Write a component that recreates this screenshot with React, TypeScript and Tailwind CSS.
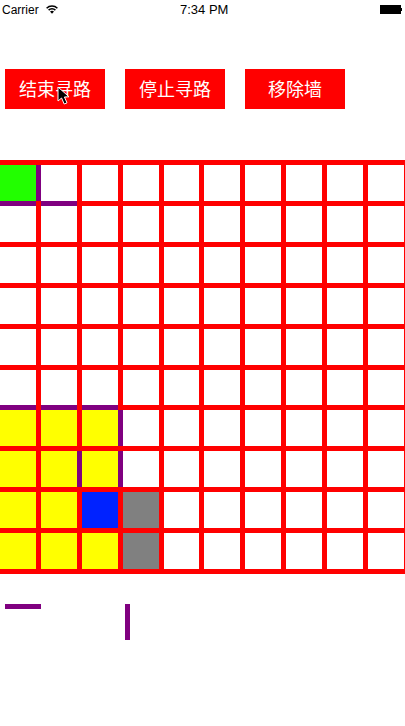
const COLORS: Record<string, string> = {
  "0-0": "bg-[#22ff00]",
  "6-0": "bg-[#ffff00]", "6-1": "bg-[#ffff00]", "6-2": "bg-[#ffff00]",
  "7-0": "bg-[#ffff00]", "7-1": "bg-[#ffff00]", "7-2": "bg-[#ffff00]",
  "8-0": "bg-[#ffff00]", "8-1": "bg-[#ffff00]", "8-2": "bg-[#0022ff]", "8-3": "bg-[#808080]",
  "9-0": "bg-[#ffff00]", "9-1": "bg-[#ffff00]", "9-2": "bg-[#ffff00]", "9-3": "bg-[#808080]",
};
const RIGHT = new Set(["0-0", "6-2", "7-1", "7-2"]);
const BOTTOM = new Set(["0-0", "0-1", "5-0", "5-1", "5-2"]);

function Wifi() {
  return (
    <svg width="12" height="9" viewBox="0 0 12 9" className="ml-[7px] mt-[-2px]" fill="none" stroke="#000">
      <path d="M0.6 3.2 A7.6 7.6 0 0 1 11.4 3.2" strokeWidth="1.5" />
      <path d="M2.6 5.1 A4.8 4.8 0 0 1 9.4 5.1" strokeWidth="1.5" />
      <path d="M4 6.6 A2.9 2.9 0 0 1 8 6.6 L6 8.8 Z" fill="#000" stroke="none" />
    </svg>
  );
}

function Cursor() {
  return (
    <svg width="14" height="20" viewBox="0 0 14 20" className="absolute left-[57px] top-[86px]">
      <path d="M1 1 L1 15 L4.6 12 L7.2 18 L10 16.8 L7.4 11 L12 10.8 Z" fill="#000" stroke="#fff" strokeWidth="1" />
    </svg>
  );
}

export default function App() {
  const rows = Array.from({ length: 10 }, (_, r) => r);
  const cols = Array.from({ length: 10 }, (_, c) => c);
  return (
    <div className="relative w-[405px] h-[726px] overflow-hidden bg-white font-['Liberation_Sans','Noto_Sans_CJK_SC',sans-serif]">
      <div className="relative flex items-center h-[20px] pl-[2px] text-[12px] leading-none text-black">
        <span>Carrier</span>
        <Wifi />
        <span className="absolute left-[180px] top-[3px] text-[13px] leading-[14px] font-medium">7:34 PM</span>
        <div className="absolute right-[3px] top-[5px] flex items-center">
          <div className="w-[21px] h-[9px] bg-black" />
          <div className="w-[1px] h-[3px] bg-black" />
        </div>
      </div>

      <div className="flex gap-[20px] pl-[5px] mt-[49px] font-['Noto_Sans_CJK_SC',sans-serif] text-[18px] text-white">
        <div className="w-[100px] h-[40px] flex items-center justify-center pb-[1px] bg-[#ff0000]">结束寻路</div>
        <div className="w-[100px] h-[40px] flex items-center justify-center pb-[1px] bg-[#ff0000]">停止寻路</div>
        <div className="w-[100px] h-[40px] flex items-center justify-center pb-[1px] bg-[#ff0000]">移除墙</div>
      </div>

      <div className="mt-[51px] w-[405px] h-[414px] overflow-hidden bg-[#ff0000] py-[5px]">
        <div className="grid gap-[5px] grid-cols-[36px_36px_36px_36px_35px_36px_36px_36px_36px_36px] grid-rows-[36px_36px_36px_36px_36px_35px_36px_36px_36px_36px]">
          {rows.map((r) =>
            cols.map((c) => {
              const key = `${r}-${c}`;
              return (
                <div key={key} className={`relative ${COLORS[key] ?? "bg-white"}`}>
                  {RIGHT.has(key) && <div className="absolute top-0 bottom-0 right-[-5px] w-[5px] bg-[#800080]" />}
                  {BOTTOM.has(key) && <div className="absolute left-0 right-0 bottom-[-5px] h-[5px] bg-[#800080]" />}
                </div>
              );
            })
          )}
        </div>
      </div>

      <div className="flex items-start pl-[5px] mt-[30px]">
        <div className="w-[36px] h-[5px] bg-[#800080]" />
        <div className="ml-[84px] w-[5px] h-[36px] bg-[#800080]" />
      </div>

      <Cursor />
    </div>
  );
}
